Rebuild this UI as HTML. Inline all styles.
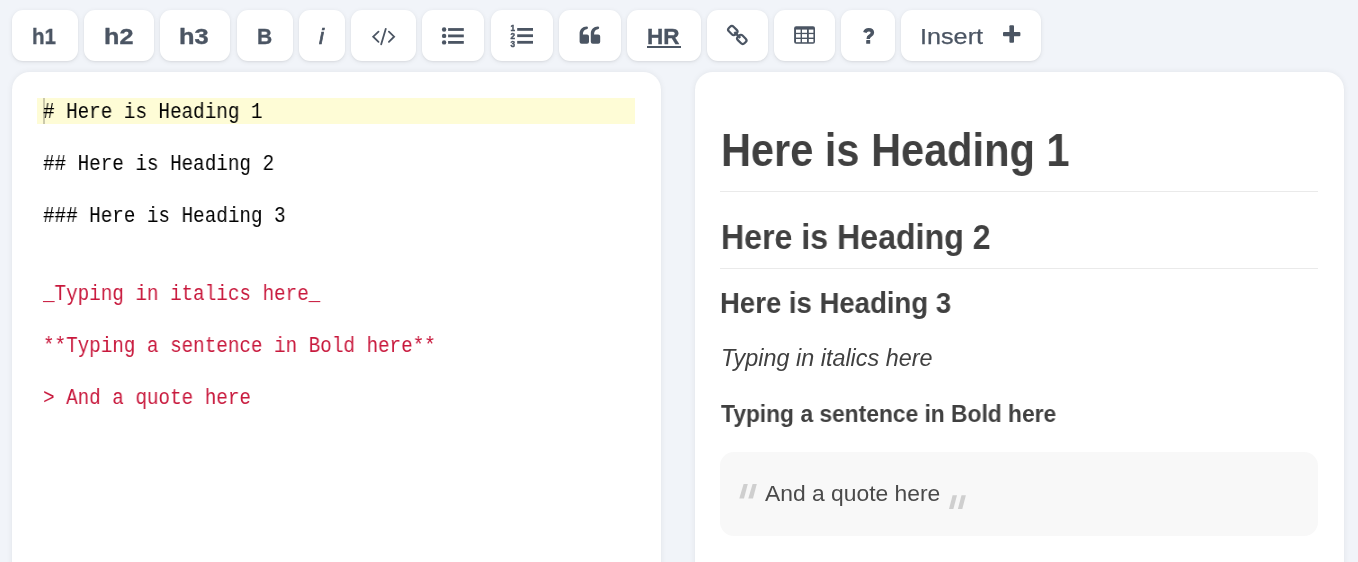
<!DOCTYPE html>
<html>
<head>
<meta charset="utf-8">
<style>
html,body{margin:0;padding:0;}
body{width:1358px;height:562px;overflow:hidden;background:#f1f4f9;position:relative;font-family:"Liberation Sans",sans-serif;}
.btn{position:absolute;top:10px;height:51px;background:#fff;border-radius:11px;box-shadow:0 1px 5px rgba(0,0,0,.08),0 1px 2px rgba(0,0,0,.05);}
.t{position:absolute;white-space:nowrap;line-height:1;transform-origin:0 0;will-change:transform;}
.bt{font-weight:bold;font-size:22.5px;color:#4b5563;top:25.5px;-webkit-text-stroke:0.35px #4b5563;}
svg.ic{position:absolute;left:0;top:0;overflow:visible;}
.panel{position:absolute;top:72px;height:520px;background:#fff;border-radius:18px;box-shadow:0 0 6px rgba(0,0,0,.07),0 1px 2px rgba(0,0,0,.04);}
.mono{font-family:"Liberation Mono",monospace;font-size:21.4px;position:absolute;left:43px;white-space:pre;line-height:26px;height:26px;transform:scaleX(0.9);transform-origin:0 0;color:#000;will-change:transform;}
.red{color:#c8183c;}
.pv{position:absolute;left:722px;white-space:nowrap;color:#404040;line-height:1;transform-origin:0 0;will-change:transform;}
</style>
</head>
<body>
<!-- toolbar -->
<div class="btn" style="left:12px;width:66px"></div>
<div class="btn" style="left:84px;width:70px"></div>
<div class="btn" style="left:160px;width:70px"></div>
<div class="btn" style="left:237px;width:56px"></div>
<div class="btn" style="left:299px;width:46px"></div>
<div class="btn" style="left:351px;width:65px"></div>
<div class="btn" style="left:422px;width:62px"></div>
<div class="btn" style="left:491px;width:62px"></div>
<div class="btn" style="left:559px;width:61.5px"></div>
<div class="btn" style="left:627px;width:74px"></div>
<div class="btn" style="left:707px;width:61px"></div>
<div class="btn" style="left:774px;width:61px"></div>
<div class="btn" style="left:841px;width:54px"></div>
<div class="btn" style="left:901px;width:140px"></div>

<span class="t bt" style="left:32px;transform:scaleX(0.91)">h1</span>
<span class="t bt" style="left:103.5px;transform:scaleX(1.12)">h2</span>
<span class="t bt" style="left:179px;transform:scaleX(1.13)">h3</span>
<span class="t bt" style="left:257px;transform:scaleX(0.93)">B</span>
<span class="t bt" style="left:318.5px;font-weight:normal;font-style:italic;-webkit-text-stroke:0.7px #4b5563">i</span>
<span class="t bt" style="left:647px">HR</span>
<div style="position:absolute;left:647px;top:46.2px;width:34px;height:1.7px;background:#4b5563"></div>
<span class="t bt" style="left:920px;font-weight:normal;transform:scaleX(1.12);-webkit-text-stroke:0.25px #4b5563">Insert</span>

<svg class="ic" width="1358" height="70" viewBox="0 0 1358 70">
  <g fill="none" stroke="#4b5563" stroke-width="1.8" stroke-linecap="round" stroke-linejoin="miter">
    <path d="M378.5 31.6 L373.2 36.7 L378.5 41.8"/>
    <path d="M388.9 31.6 L394.1 36.7 L388.9 41.8"/>
    <path d="M385.8 28.8 L381.2 44.3"/>
  </g>
  <g fill="#4b5563">
    <circle cx="444.1" cy="29.5" r="2.2"/><circle cx="444.1" cy="35.9" r="2.2"/><circle cx="444.1" cy="42.4" r="2.2"/>
    <rect x="448.1" y="28.1" width="15.7" height="2.8"/><rect x="448.1" y="34.5" width="15.7" height="2.8"/><rect x="448.1" y="41" width="15.7" height="2.8"/>
    <rect x="517.2" y="28" width="15.8" height="2.8"/><rect x="517.2" y="34.3" width="15.8" height="2.8"/><rect x="517.2" y="40.9" width="15.8" height="2.8"/>
    <text x="510.6" y="30.9" font-family="Liberation Sans" font-weight="bold" font-size="8.2" stroke="#4b5563" stroke-width="0.4">1</text>
    <text x="510.6" y="38.7" font-family="Liberation Sans" font-weight="bold" font-size="8.2" stroke="#4b5563" stroke-width="0.4">2</text>
    <text x="510.6" y="46.6" font-family="Liberation Sans" font-weight="bold" font-size="8.2" stroke="#4b5563" stroke-width="0.4">3</text>
    <path transform="translate(579.6,26.4)" d="M0 9.5 L0 7 C0 3 3 0.2 7 0 A1.4 1.4 0 0 1 7 2.8 C4.8 3 3.3 4.8 3.3 7.6 L3.3 8 L7.4 8 Q9.4 8 9.4 10 L9.4 15.4 Q9.4 17.4 7.4 17.4 L2 17.4 Q0 17.4 0 15.4 Z"/>
    <path transform="translate(590.8,26.4)" d="M0 9.5 L0 7 C0 3 3 0.2 7 0 A1.4 1.4 0 0 1 7 2.8 C4.8 3 3.3 4.8 3.3 7.6 L3.3 8 L7.4 8 Q9.4 8 9.4 10 L9.4 15.4 Q9.4 17.4 7.4 17.4 L2 17.4 Q0 17.4 0 15.4 Z"/>
  </g>
  <g fill="none" stroke="#4b5563" stroke-width="2.2">
    <rect transform="translate(732.8,30.6) rotate(45)" x="-4.65" y="-3.3" width="9.3" height="6.6" rx="2.4"/>
    <rect transform="translate(741.8,39.4) rotate(45)" x="-4.65" y="-3.3" width="9.3" height="6.6" rx="2.4"/>
    <path d="M734.3 32.1 L740.3 37.9" stroke-width="2.4"/>
  </g>
  <g>
    <rect x="794.1" y="26.3" width="20.9" height="17.5" rx="2" fill="#4b5563"/>
    <g fill="#fff">
      <rect x="796" y="29.6" width="4.6" height="3.2"/><rect x="802" y="29.6" width="5" height="3.2"/><rect x="808.8" y="29.6" width="4.6" height="3.2"/>
      <rect x="796" y="34.1" width="4.6" height="3.5"/><rect x="802" y="34.1" width="5" height="3.5"/><rect x="808.8" y="34.1" width="4.6" height="3.5"/>
      <rect x="796" y="39" width="4.6" height="3.2"/><rect x="802" y="39" width="5" height="3.2"/><rect x="808.8" y="39" width="4.6" height="3.2"/>
    </g>
  </g>
  <path d="M864.8 32.6 C865.4 30.6 866.9 29.7 868.7 29.7 C870.9 29.7 872.4 30.9 872.4 32.7 C872.4 34.5 871.1 35.2 869.8 36.0 C868.6 36.7 868.2 37.4 868.2 38.9" fill="none" stroke="#4b5563" stroke-width="3.5"/>
  <rect x="866.2" y="40" width="4" height="3.8" rx="0.4" fill="#4b5563"/>
  <g fill="#4b5563">
    <rect x="1003" y="32" width="17.4" height="4.3" rx="1"/>
    <rect x="1009.4" y="25.3" width="4.6" height="17.4" rx="1"/>
  </g>
</svg>

<!-- panels -->
<div class="panel" style="left:12px;width:649px"></div>
<div class="panel" style="left:695px;width:649px"></div>

<!-- editor -->
<div style="position:absolute;left:37px;top:98px;width:598px;height:26px;background:#fefcd6"></div>
<div style="position:absolute;left:43px;top:98px;width:2.2px;height:26px;background:#cbc9ab"></div>
<div class="mono" style="top:99.1px"># Here is Heading 1</div>
<div class="mono" style="top:151.1px">## Here is Heading 2</div>
<div class="mono" style="top:203.1px">### Here is Heading 3</div>
<div class="mono red" style="top:281.1px">_Typing in italics here_</div>
<div class="mono red" style="top:333.1px">**Typing a sentence in Bold here**</div>
<div class="mono red" style="top:385.1px">&gt; And a quote here</div>

<!-- preview -->
<div class="pv" style="left:720.5px;top:127px;font-size:46.2px;font-weight:bold;transform:scaleX(0.899)">Here is Heading 1</div>
<div style="position:absolute;left:720px;top:191px;width:598px;height:1px;background:#eaeaea"></div>
<div class="pv" style="left:720.6px;top:219.7px;font-size:34.4px;font-weight:bold;transform:scaleX(0.934)">Here is Heading 2</div>
<div style="position:absolute;left:720px;top:268px;width:598px;height:1px;background:#eaeaea"></div>
<div class="pv" style="left:720px;top:288.5px;font-size:28.9px;font-weight:bold;transform:scaleX(0.953)">Here is Heading 3</div>
<div class="pv" style="left:720.7px;top:346.5px;font-size:23.1px;font-style:italic;transform:scaleX(1.013)">Typing in italics here</div>
<div class="pv" style="left:721.3px;top:403px;font-size:23.1px;font-weight:bold;transform:scaleX(0.987)">Typing a sentence in Bold here</div>
<div style="position:absolute;left:720px;top:452px;width:598px;height:83.5px;background:#f8f8f8;border-radius:14px"></div>
<div class="pv" style="left:765.3px;top:482px;font-size:22.8px;color:#4a4a4a;transform:scaleX(1.002)">And a quote here</div>
<svg class="ic" width="1358" height="562" viewBox="0 0 1358 562">
  <g fill="#cfcfcf">
    <path d="M743.6 484 L747.8 484 L744.0 498.5 L739.3 498.5 Z"/>
    <path d="M752.6 484 L756.8 484 L753.0 498.5 L748.3 498.5 Z"/>
    <path d="M952.6 495.2 L957.0 495.2 L953.4 509.1 L949.0 509.1 Z"/>
    <path d="M961.5 495.2 L965.9 495.2 L962.3 509.1 L957.9 509.1 Z"/>
  </g>
</svg>
</body>
</html>
